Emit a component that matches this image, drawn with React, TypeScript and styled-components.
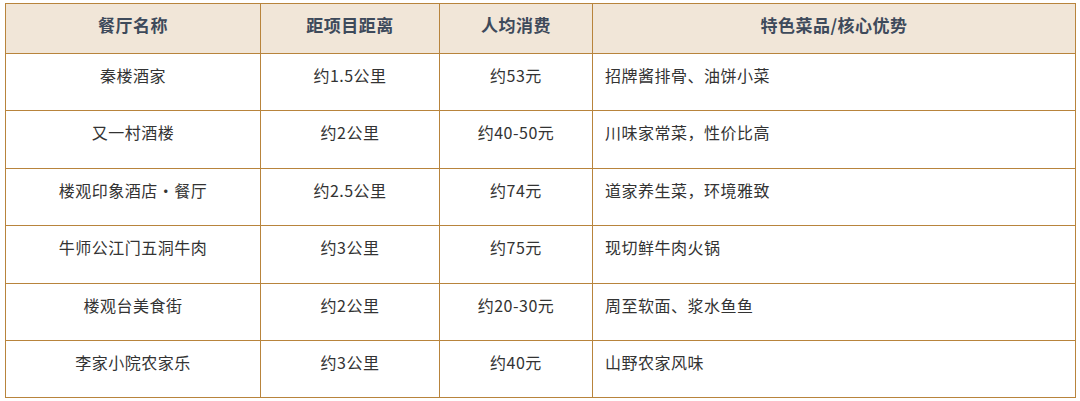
// Dépendances
import React from "react";
import styled, { createGlobalStyle } from "styled-components";

// Styles globaux
const GlobalStyle = createGlobalStyle`
  * { box-sizing: border-box; }
  body {
    margin: 0;
    background: #ffffff;
    font-family: "Noto Sans CJK SC", "Noto Sans", sans-serif;
  }
`;

// Styled Components
const Wrapper = styled.div`
  padding: 3px 4px 0 5px;
`;

const Table = styled.table`
  width: 100%;
  border-collapse: collapse;
  table-layout: fixed;
  border: 1px solid #b8843c;
`;

const HeadCell = styled.th`
  background-color: #f1e6d8;
  color: #3e4a5b;
  font-size: 17px;
  font-weight: 700;
  letter-spacing: 0.5px;
  line-height: 26px;
  padding: 8px 12px 15px;
  text-align: center;
  border: 1px solid #b8843c;
`;

const Cell = styled.td<{ $left?: boolean }>`
  color: #333333;
  font-size: 16px;
  letter-spacing: 0.5px;
  line-height: 24px;
  padding: 9px 12px 23.4px;
  vertical-align: top;
  text-align: ${(props) => (props.$left ? "left" : "center")};
  border: 1px solid #b8843c;
  white-space: nowrap;
`;

const restaurants = [
  { name: "秦楼酒家", distance: "约1.5公里", price: "约53元", feature: "招牌酱排骨、油饼小菜" },
  { name: "又一村酒楼", distance: "约2公里", price: "约40-50元", feature: "川味家常菜，性价比高" },
  { name: "楼观印象酒店・餐厅", distance: "约2.5公里", price: "约74元", feature: "道家养生菜，环境雅致" },
  { name: "牛师公江门五洞牛肉", distance: "约3公里", price: "约75元", feature: "现切鲜牛肉火锅" },
  { name: "楼观台美食街", distance: "约2公里", price: "约20-30元", feature: "周至软面、浆水鱼鱼" },
  { name: "李家小院农家乐", distance: "约3公里", price: "约40元", feature: "山野农家风味" },
];

function App() {
  return (
    <React.Fragment>
      <GlobalStyle />
      <Wrapper>
        <Table>
          <colgroup>
            <col style={{ width: 255 }} />
            <col style={{ width: 179 }} />
            <col style={{ width: 153 }} />
            <col />
          </colgroup>
          <thead>
            <tr>
              <HeadCell>餐厅名称</HeadCell>
              <HeadCell>距项目距离</HeadCell>
              <HeadCell>人均消费</HeadCell>
              <HeadCell>特色菜品/核心优势</HeadCell>
            </tr>
          </thead>
          <tbody>
            {restaurants.map((r) => (
              <tr key={r.name}>
                <Cell>{r.name}</Cell>
                <Cell>{r.distance}</Cell>
                <Cell>{r.price}</Cell>
                <Cell $left>{r.feature}</Cell>
              </tr>
            ))}
          </tbody>
        </Table>
      </Wrapper>
    </React.Fragment>
  );
}

export default App;
